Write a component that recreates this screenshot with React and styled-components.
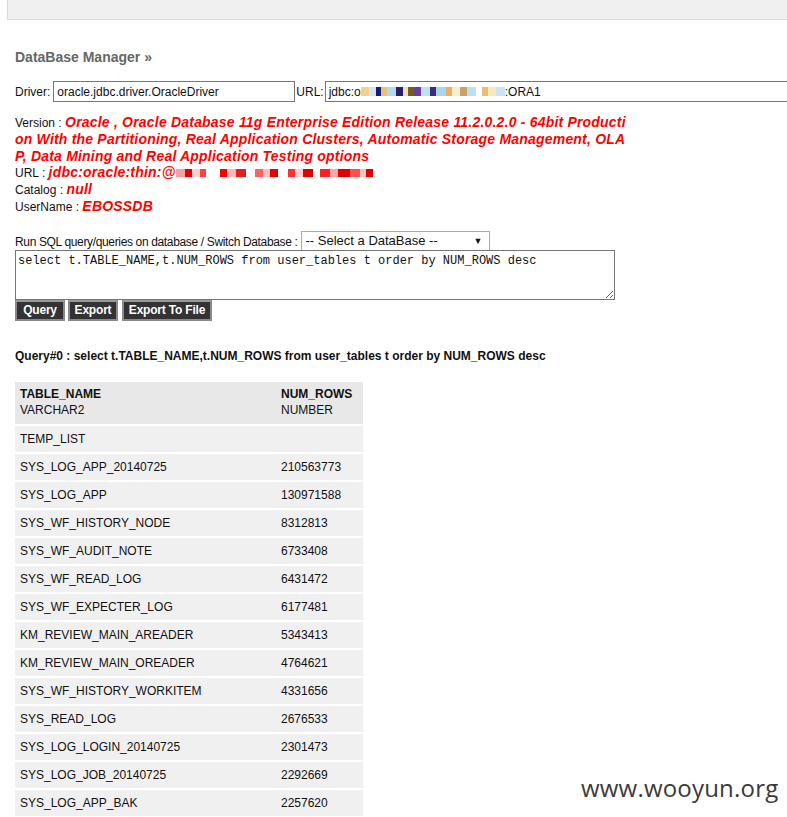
import React from "react";
import styled, { createGlobalStyle } from "styled-components";

const Global = createGlobalStyle`
  html, body { margin: 0; padding: 0; background: #fff; }
  body { font-family: "Liberation Sans", Arial, sans-serif; font-size: 12px; color: #222; overflow: hidden; }
`;

const Page = styled.div`
  width: 787px;
  height: 817px;
  overflow: hidden;
`;

const TopBar = styled.div`
  margin-left: 7px;
  height: 19px;
  background: #f0f0f0;
  border-left: 1px solid #d8d8d8;
  border-bottom: 1px solid #d8d8d8;
`;

const Content = styled.div`
  padding-left: 15px;
`;

const Title = styled.h2`
  margin: 29px 0 0;
  font-size: 14px;
  line-height: 16px;
  font-weight: bold;
  color: #666;
`;

const ConnRow = styled.div`
  margin-top: 16px;
  display: flex;
  align-items: center;
  white-space: nowrap;
  color: #111;
`;

const Label = styled.span`
  margin-right: ${(p) => p.$mr || 1}px;
`;

const Field = styled.div`
  box-sizing: border-box;
  height: 21px;
  width: ${(p) => p.$w}px;
  flex-shrink: 0;
  border: 1px solid #777;
  padding: 0 3px;
  display: flex;
  align-items: center;
  font-size: 12px;
  color: #111;
  background: #fff;
  margin-right: 1px;
`;

const Mosaic = styled.span`
  display: inline-flex;
  align-items: center;
  height: 10px;
`;

const Px = styled.span`
  display: inline-block;
  width: ${(p) => p.$w || 4}px;
  height: ${(p) => p.$h || 6}px;
  background: ${(p) => p.$c};
`;

const Info = styled.div`
  margin-top: 13px;
  width: 612px;
  font-size: 12px;
  line-height: 16.8px;
  color: #111;
  word-break: break-all;
`;

const Val = styled.span`
  color: #f00;
  font-weight: bold;
  font-style: italic;
  font-size: 14px;
  line-height: 15px;
  letter-spacing: 0.2px;
`;

const RunRow = styled.div`
  margin-top: 15px;
  display: flex;
  align-items: flex-end;
  color: #111;
  white-space: nowrap;
`;

const RunLabel = styled.span`
  letter-spacing: -0.35px;
  line-height: 15px;
`;

const Select = styled.div`
  box-sizing: border-box;
  margin-left: 3px;
  width: 189px;
  height: 19px;
  border: 1px solid #aaa;
  border-bottom: none;
  display: flex;
  align-items: center;
  justify-content: space-between;
  padding: 0 4px;
  font-size: 13px;
  color: #111;
  background: #fff;
`;

const Arrow = styled.span`
  font-size: 9px;
  margin-right: 2px;
`;

const SqlBox = styled.textarea`
  display: block;
  box-sizing: border-box;
  width: 600px;
  height: 50px;
  margin: 0;
  border: 1px solid #767676;
  padding: 3px 2px;
  font-family: "Liberation Mono", "Courier New", monospace;
  font-size: 12px;
  color: #111;
  resize: vertical;
`;

const Buttons = styled.div`
  display: flex;
  gap: 3px;
`;

const Btn = styled.button`
  box-sizing: border-box;
  height: 21px;
  width: ${(p) => p.$w}px;
  margin-right: ${(p) => p.$mr || 0}px;
  background: #333;
  color: #fff;
  border: 2px solid #8a8a8a;
  border-top-color: #999;
  font-family: "Liberation Sans", Arial, sans-serif;
  font-weight: bold;
  font-size: 12px;
  letter-spacing: -0.2px;
  padding: 0;
`;

const QueryTitle = styled.div`
  margin-top: 27px;
  font-weight: bold;
  font-size: 12px;
  line-height: 16px;
  color: #111;
`;

const Table = styled.table`
  margin-top: 18px;
  width: 348px;
  border-collapse: separate;
  border-spacing: 0;
  font-size: 12px;
  color: #111;
`;

const Th = styled.th`
  background: #e8e8e8;
  text-align: left;
  vertical-align: top;
  padding: 4px 5px 6px;
  line-height: 16px;
  width: ${(p) => p.$w || "auto"};
`;

const ThName = styled.div`
  font-weight: bold;
`;

const ThType = styled.div`
  font-weight: normal;
`;

const Td = styled.td`
  background: #f0f0f0;
  border-top: 2px solid #fff;
  padding: 6px 5px;
  line-height: 14px;
`;

const Watermark = styled.div`
  position: absolute;
  left: 581px;
  top: 771px;
  font-family: "Open Sans", "Noto Sans", sans-serif;
  font-size: 24px;
  color: #3a3a3a;
  letter-spacing: 0.2px;
`;

const rows = [
  ["TEMP_LIST", ""],
  ["SYS_LOG_APP_20140725", "210563773"],
  ["SYS_LOG_APP", "130971588"],
  ["SYS_WF_HISTORY_NODE", "8312813"],
  ["SYS_WF_AUDIT_NOTE", "6733408"],
  ["SYS_WF_READ_LOG", "6431472"],
  ["SYS_WF_EXPECTER_LOG", "6177481"],
  ["KM_REVIEW_MAIN_AREADER", "5343413"],
  ["KM_REVIEW_MAIN_OREADER", "4764621"],
  ["SYS_WF_HISTORY_WORKITEM", "4331656"],
  ["SYS_READ_LOG", "2676533"],
  ["SYS_LOG_LOGIN_20140725", "2301473"],
  ["SYS_LOG_JOB_20140725", "2292669"],
  ["SYS_LOG_APP_BAK", "2257620"],
];

const urlMosaic = [
  ["#f5d08a", 8], ["#c9e6f7", 7], ["#1a1a6e", 5], ["#e8c27a", 6], ["#b4d8f0", 9],
  ["#2b1f6b", 7], ["#f0e0b0", 5], ["#7a5a20", 6], ["#6b3f9a", 7], ["#c0e0f8", 9],
  ["#3a2a80", 6], ["#a8d4f0", 10], ["#e8b060", 6], ["#f0f0d0", 8], ["#d0a060", 7],
  ["#b8e0f8", 9], ["#fff", 6], ["#e8c070", 6], ["#f8e8c0", 8], ["#c8e4f8", 9],
];

const redMosaic = [
  ["#f8a0a0", 9], ["#e00000", 7], ["#fcd0d0", 8], ["#ff4040", 6], ["#fff", 14],
  ["#f80000", 7], ["#f8b8b8", 9], ["#e02020", 10], ["#fff", 9], ["#ff6060", 8],
  ["#f8c0c0", 7], ["#e00000", 8], ["#fff", 10], ["#ff3030", 7], ["#fcd0d0", 8],
  ["#e00000", 10], ["#fff", 7], ["#ff2020", 10], ["#f8a8a8", 8], ["#e00000", 12],
  ["#ff5050", 10], ["#fcc0c0", 6], ["#e00000", 7],
];

function MosaicStrip({ cells, h }) {
  return (
    <Mosaic>
      {cells.map(([c, w], i) => (
        <Px key={i} $c={c} $w={w} $h={h} />
      ))}
    </Mosaic>
  );
}

export default function App() {
  return (
    <Page>
      <Global />
      <TopBar />
      <Content>
        <Title>DataBase Manager »</Title>
        <ConnRow>
          <Label $mr={3}>Driver:</Label>
          <Field $w={242}>oracle.jdbc.driver.OracleDriver</Field>
          <Label>URL:</Label>
          <Field $w={480}>
            jdbc:o
            <MosaicStrip cells={urlMosaic} h={9} />
            :ORA1
          </Field>
        </ConnRow>
        <Info>
          Version :{" "}
          <Val>
            Oracle , Oracle Database 11g Enterprise Edition Release 11.2.0.2.0 - 64bit Production With the
            Partitioning, Real Application Clusters, Automatic Storage Management, OLAP, Data Mining and Real
            Application Testing options
          </Val>
          <br />
          URL :{" "}
          <Val>
            jdbc:oracle:thin:@
            <MosaicStrip cells={redMosaic} h={8} />
          </Val>
          <br />
          Catalog : <Val>null</Val>
          <br />
          UserName : <Val>EBOSSDB</Val>
        </Info>
        <RunRow>
          <RunLabel>Run SQL query/queries on database / Switch Database :</RunLabel>
          <Select>
            <span>-- Select a DataBase --</span>
            <Arrow>▼</Arrow>
          </Select>
        </RunRow>
        <SqlBox
          defaultValue="select t.TABLE_NAME,t.NUM_ROWS from user_tables t order by NUM_ROWS desc"
          spellCheck={false}
        />
        <Buttons>
          <Btn $w={50}>Query</Btn>
          <Btn $w={50} $mr={1}>Export</Btn>
          <Btn $w={90}>Export To File</Btn>
        </Buttons>
        <QueryTitle>
          Query#0 : select t.TABLE_NAME,t.NUM_ROWS from user_tables t order by NUM_ROWS desc
        </QueryTitle>
        <Table>
          <thead>
            <tr>
              <Th $w="251px">
                <ThName>TABLE_NAME</ThName>
                <ThType>VARCHAR2</ThType>
              </Th>
              <Th>
                <ThName>NUM_ROWS</ThName>
                <ThType>NUMBER</ThType>
              </Th>
            </tr>
          </thead>
          <tbody>
            {rows.map(([name, num]) => (
              <tr key={name}>
                <Td>{name}</Td>
                <Td>{num}</Td>
              </tr>
            ))}
          </tbody>
        </Table>
      </Content>
      <Watermark>www.wooyun.org</Watermark>
    </Page>
  );
}
